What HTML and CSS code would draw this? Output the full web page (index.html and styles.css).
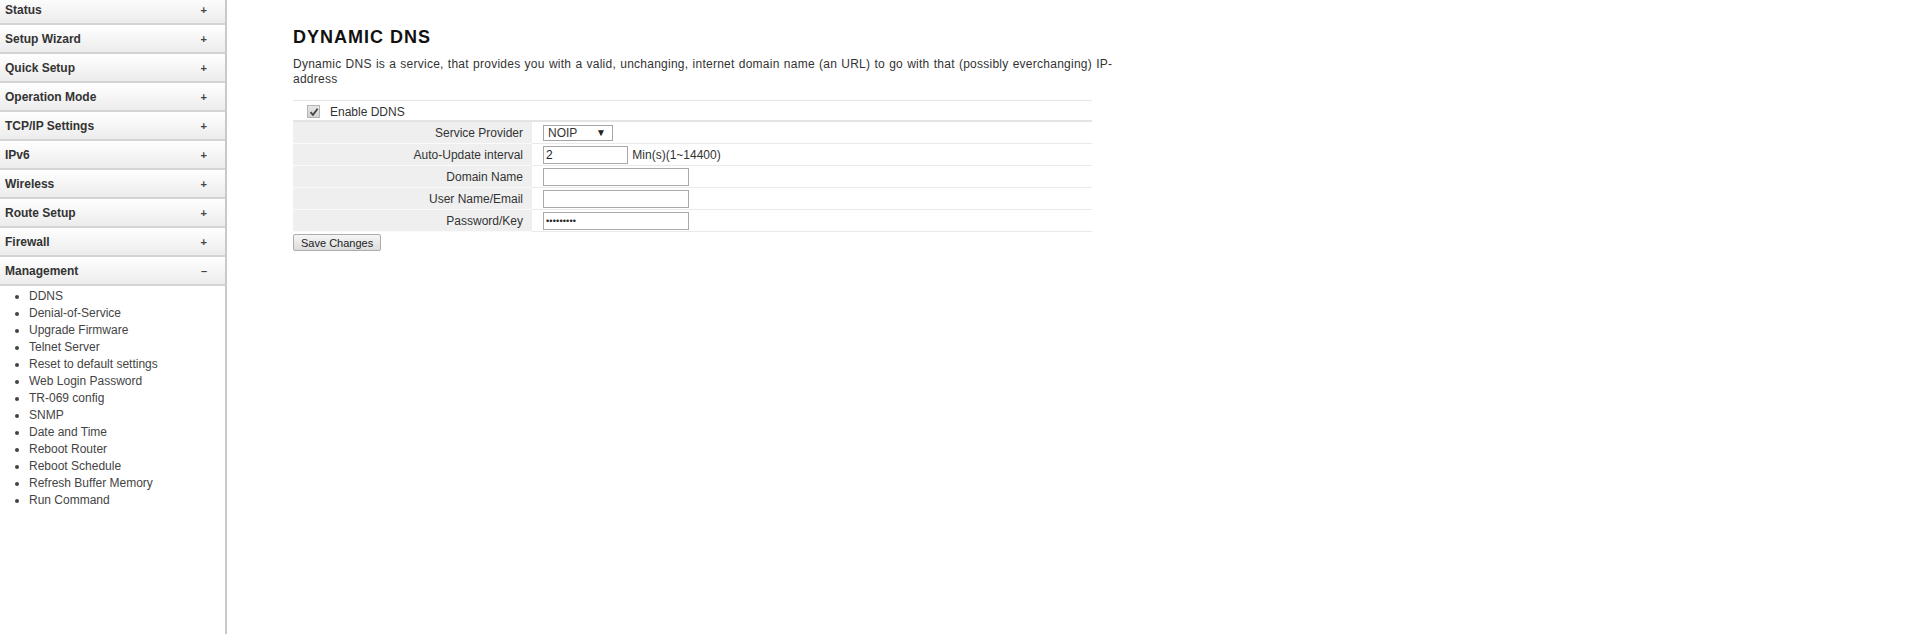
FILE: index.html
```html
<!DOCTYPE html>
<html>
<head>
<meta charset="utf-8">
<title>Dynamic DNS</title>
<link rel="stylesheet" href="styles.css">
</head>
<body>
<div class="page">
  <nav class="sidebar">
    <div class="menu">
      <div class="menu-head"><span>Status</span><span class="sign">+</span></div>
      <div class="menu-head"><span>Setup Wizard</span><span class="sign">+</span></div>
      <div class="menu-head"><span>Quick Setup</span><span class="sign">+</span></div>
      <div class="menu-head"><span>Operation Mode</span><span class="sign">+</span></div>
      <div class="menu-head"><span>TCP/IP Settings</span><span class="sign">+</span></div>
      <div class="menu-head"><span>IPv6</span><span class="sign">+</span></div>
      <div class="menu-head"><span>Wireless</span><span class="sign">+</span></div>
      <div class="menu-head"><span>Route Setup</span><span class="sign">+</span></div>
      <div class="menu-head"><span>Firewall</span><span class="sign">+</span></div>
      <div class="menu-head"><span>Management</span><span class="sign">&ndash;</span></div>
      <ul class="submenu">
        <li>DDNS</li>
        <li>Denial-of-Service</li>
        <li>Upgrade Firmware</li>
        <li>Telnet Server</li>
        <li>Reset to default settings</li>
        <li>Web Login Password</li>
        <li>TR-069 config</li>
        <li>SNMP</li>
        <li>Date and Time</li>
        <li>Reboot Router</li>
        <li>Reboot Schedule</li>
        <li>Refresh Buffer Memory</li>
        <li>Run Command</li>
      </ul>
    </div>
  </nav>
  <main class="content">
    <h1 class="title">DYNAMIC DNS</h1>
    <p class="desc">Dynamic DNS is a service, that provides you with a valid, unchanging, internet domain name (an URL) to go with that (possibly everchanging) IP-address</p>
    <table class="form">
      <tr class="enable-row">
        <td colspan="2">
          <label class="enable">
            <span class="cbox"><svg width="10" height="10" viewBox="0 0 10 10"><path d="M1.5 5.2 L4 7.8 L8.6 1.8" fill="none" stroke="#444" stroke-width="1.8"/></svg></span>
            <span>Enable DDNS</span>
          </label>
        </td>
      </tr>
      <tr>
        <td class="lbl">Service Provider</td>
        <td class="val"><span class="sel"><select class="provider"><option>NOIP</option></select><span class="arrow">&#9660;</span></span></td>
      </tr>
      <tr>
        <td class="lbl">Auto-Update interval</td>
        <td class="val"><input class="txt short" type="text" value="2"> <span class="unit">Min(s)(1~14400)</span></td>
      </tr>
      <tr>
        <td class="lbl">Domain Name</td>
        <td class="val"><input class="txt" type="text" value=""></td>
      </tr>
      <tr>
        <td class="lbl">User Name/Email</td>
        <td class="val"><input class="txt" type="text" value=""></td>
      </tr>
      <tr>
        <td class="lbl">Password/Key</td>
        <td class="val"><input class="txt pass" type="password" value="123456789"></td>
      </tr>
    </table>
    <button class="save" type="button">Save Changes</button>
  </main>
</div>
</body>
</html>
```

FILE: styles.css
```css
html, body {
  margin: 0;
  padding: 0;
  background: #fff;
  font-family: "Liberation Sans", Arial, sans-serif;
  font-size: 12px;
  color: #333;
}

.page {
  display: flex;
  height: 634px;
  overflow: hidden;
}

.sidebar {
  width: 225px;
  flex: none;
  border-right: 2px solid #c9c9c9;
  height: 100%;
}

.menu {
  margin-top: -4px;
}

.menu-head {
  display: flex;
  justify-content: space-between;
  align-items: center;
  height: 27px;
  padding: 0 18px 0 5px;
  font-weight: bold;
  font-size: 12px;
  color: #333;
  background: linear-gradient(#ffffff, #ececec);
  border-bottom: 2px solid #d4d4d4;
}

.sign {
  font-weight: bold;
  color: #444;
  font-size: 11px;
}

.submenu {
  margin: 2px 0 0 0;
  padding-left: 29px;
  list-style: disc;
  color: #444;
  line-height: 17px;
}

.content {
  margin-left: 66px;
  width: 830px;
}

.title {
  margin: 27px 0 0 0;
  font-size: 18px;
  line-height: 21px;
  font-weight: bold;
  letter-spacing: 1px;
  color: #111;
}

.desc {
  margin: 9px 0 0 0;
  line-height: 15px;
  color: #333;
  letter-spacing: 0.25px;
  word-spacing: 0.6px;
}

.form {
  margin-top: 13px;
  width: 799px;
  border-collapse: collapse;
}

.form td {
  padding: 0;
  height: 21px;
  border-bottom: 1px solid #e9e9e9;
}

.enable-row td {
  height: 17px;
  padding-top: 2px;
  border-top: 1px solid #e6e6e6;
  border-bottom: 2px solid #e4e4e4;
}

.enable {
  display: flex;
  align-items: center;
  padding-left: 14px;
  gap: 10px;
}

.cbox {
  display: inline-flex;
  align-items: center;
  justify-content: center;
  width: 11px;
  height: 11px;
  border: 1px solid #b5b5b5;
  background: linear-gradient(#e6e6e6, #d2d2d2);
}

.lbl {
  width: 230px;
  text-align: right;
  padding-right: 9px !important;
  background: #efefef;
  border-bottom: 1px solid #fafafa !important;
}

.val {
  padding-left: 11px !important;
}

.sel {
  position: relative;
  display: inline-block;
  vertical-align: middle;
}

.provider {
  appearance: none;
  -webkit-appearance: none;
  width: 70px;
  height: 16px;
  border: 1px solid #a6a6a6;
  background: #fff;
  font-family: "Liberation Sans", Arial, sans-serif;
  font-size: 12px;
  color: #333;
  padding: 0 0 0 4px;
  margin: 0;
  border-radius: 0;
}

.arrow {
  position: absolute;
  right: 7px;
  top: 2px;
  font-size: 10px;
  color: #222;
  pointer-events: none;
}

.txt {
  width: 146px;
  height: 18px;
  box-sizing: border-box;
  border: 1px solid #a9a9a9;
  padding: 0 2px;
  margin: 0;
  font-family: "Liberation Sans", Arial, sans-serif;
  font-size: 12px;
  color: #222;
  vertical-align: middle;
}

.txt.short {
  width: 85px;
}

.txt.pass {
  font-size: 9px;
  letter-spacing: 0.2px;
}

.unit {
  vertical-align: middle;
  margin-left: 1px;
}

.save {
  margin-top: 2px;
  height: 17px;
  padding: 0 7px;
  font-family: "Liberation Sans", Arial, sans-serif;
  font-size: 11px;
  color: #222;
  border: 1px solid #acacac;
  border-radius: 2px;
  background: linear-gradient(#f6f6f6, #dcdcdc);
}
```
